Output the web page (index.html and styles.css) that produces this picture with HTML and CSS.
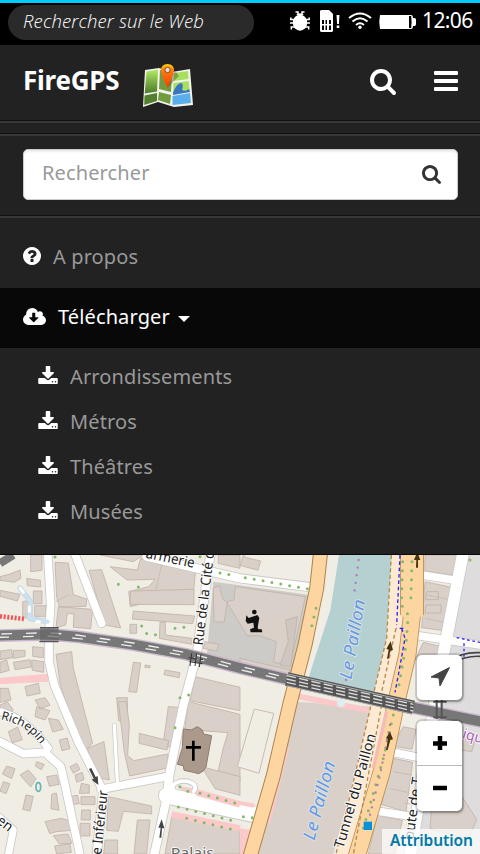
FILE: index.html
```html
<!DOCTYPE html>
<html lang="fr">
<head>
<meta charset="utf-8">
<title>FireGPS</title>
<link rel="stylesheet" href="styles.css">
</head>
<body>
<svg class="defs" aria-hidden="true">
  <symbol id="search" viewBox="64 128 1664 1664"><path d="M1216 832q0-185-131.500-316.500t-316.500-131.500-316.500 131.500-131.500 316.500 131.500 316.500 316.500 131.500 316.500-131.500 131.500-316.500zm512 832q0 52-38 90t-90 38q-54 0-90-38l-343-342q-179 124-399 124-143 0-273.500-55.500t-225-150-150-225-55.500-273.500 55.500-273.500 150-225 225-150 273.500-55.500 273.500 55.500 225 150 150 225 55.500 273.500q0 220-124 399l343 343q37 37 37 90z"/></symbol>
  <symbol id="download" viewBox="64 0 1664 1536"><path d="M1344 1344q0-26-19-45t-45-19-45 19-19 45 19 45 45 19 45-19 19-45zm256 0q0-26-19-45t-45-19-45 19-19 45 19 45 45 19 45-19 19-45zm128-224v320q0 40-28 68t-68 28h-1472q-40 0-68-28t-28-68v-320q0-40 28-68t68-28h465l135 136q58 56 136 56t136-56l136-136h464q40 0 68 28t28 68zm-325-569q17 41-14 70l-448 448q-18 19-45 19t-45-19l-448-448q-31-29-14-70 17-39 59-39h256v-448q0-26 19-45t45-19h256q26 0 45 19t19 45v448h256q42 0 59 39z"/></symbol>
  <symbol id="cloud" viewBox="-64 128 1920 1408"><path d="M1216 928q0-14-9-23t-23-9h-224v-352q0-13-9.500-22.500t-22.500-9.500h-192q-13 0-22.500 9.500t-9.500 22.500v352h-224q-13 0-22.500 9.500t-9.500 22.500q0 14 9 23l352 352q9 9 23 9t23-9l351-351q10-12 10-24zm640 224q0 159-112.500 271.500t-271.500 112.500h-1088q-185 0-316.500-131.500t-131.500-316.500q0-130 70-240t188-165q-2-30-2-43 0-212 150-362t362-150q156 0 285.500 87t188.500 231q71-62 166-62 106 0 181 75t75 181q0 76-41 138 130 31 213.500 135.500t83.500 238.500z"/></symbol>
  <symbol id="question" viewBox="128 128 1536 1536"><path d="M1024 1376v-192q0-14-9-23t-23-9h-192q-14 0-23 9t-9 23v192q0 14 9 23t23 9h192q14 0 23-9t9-23zm256-672q0-88-55.500-163t-138.500-116-170-41q-243 0-371 213-15 24 8 42l132 100q7 6 19 6 16 0 25-12 53-68 86-92 34-24 86-24 48 0 85.500 26t37.500 59q0 38-20 61t-68 45q-63 28-115.500 86.500t-52.500 125.500v36q0 14 9 23t23 9h192q14 0 23-9t9-23q0-19 21.500-49.500t54.500-49.500q32-18 49-28.500t46-35 44.500-48 28-60.500 12.500-81zm384 192q0 209-103 385.500t-279.500 279.500-385.500 103-385.500-103-279.500-279.500-103-385.500 103-385.500 279.500-279.500 385.500-103 385.500 103 279.500 279.500 103 385.500z"/></symbol>
</svg>

<header class="status">
  <div class="websearch"><span>Rechercher sur le Web</span></div>
  <svg class="status-icons" viewBox="288 8 130 26" width="130" height="26">
    <g fill="none" stroke="#fff" stroke-width="1.500">
      <path d="M295.500 12h2.500v3M304.500 12h-2.500v3M290.800 17.500v2h18.400v-2M290 23h20M291.300 29.500V27h17.400v2.500"/>
    </g>
    <ellipse cx="300" cy="22.700" rx="7.200" ry="8" fill="#fff"/><path d="M296 15q4-3.500 8 0z" fill="#fff"/>
    <path d="M320 11l1-1h8l4 4v17l-1 1h-11l-1-1z" fill="#fff"/>
    <path d="M322 20h2v4h-2zM325.500 20h1.500v4h-1.500zM329 20h2v4h-2zM322 25.500h2V30h-2zM325.500 25.500h1.500V30h-1.500zM329 25.500h2V30h-2z" fill="#000"/>
    <path d="M336.500 15h3l-.6 9h-1.800zM336.700 25.500h2.600v2.500h-2.600z" fill="#fff"/>
    <g fill="none" stroke="#fff" stroke-width="2"><path d="M349 18q11-9 22 0M352.500 21.500q7.500-6.500 15 0M356 25q4-3.500 8 0"/></g>
    <circle cx="360" cy="27.200" r="1.700" fill="#fff"/>
    <path d="M380 15h31q2 0 2 3h1.500q1.500 0 1.500 2v4q0 2-1.500 2H413q0 3-2 3h-31q-1.500-7 0-14z" fill="#fff"/>
    <path d="M409 16h2.200q.8 6 0 12H409z" fill="#000"/>
  </svg>
  <span class="clock">12:06</span>
</header>

<nav class="navbar">
  <div class="navbar-head">
    <span class="brand">FireGPS</span>
    <svg class="logo" viewBox="0 0 50 46" width="50" height="46">
      <defs><linearGradient id="green" x2="0" y2="1"><stop stop-color="#b5ed63"/><stop offset=".55" stop-color="#78aa43"/><stop offset="1" stop-color="#4f7a28"/></linearGradient>
      <linearGradient id="pin" x2="0" y2="1"><stop stop-color="#ffd500"/><stop offset=".25" stop-color="#ff7b10"/><stop offset="1" stop-color="#f04000"/></linearGradient></defs>
      <path d="M2 7l14-2 13 4 18-3 3 36-19 2-16-5-15 5z" fill="#f3f3ee"/>
      <path d="M3.500 8.500L15 6.500l-1 22-12.300 2z" fill="url(#green)"/><path d="M1.500 32.500L14 30v8L1.200 42z" fill="#547f2e"/>
      <path d="M17 7l12 4-1 18-12-3zM16 29l12 3-1 9-12-4z" fill="#719c3d"/>
      <path d="M31 10l14-2 .6 8-15 2zM30.500 20l15.300-2 .7 9-16.500 3z" fill="#a9df5e"/>
      <path d="M30 30q3-9 8-10 3 1 1 7 3 2 7-1l1 3-17 3z" fill="#3875c0"/><path d="M29.500 33l17.500-3 1 10-18.500 2z" fill="#5aaeec"/>
      <path d="M24 25L36 13l-3-4-6 2z" fill="#263516" opacity=".35"/>
      <path d="M24.500 25Q18 12 18 7.500 18 1 24.500 1T31 7.500Q31 12 24.500 25z" fill="url(#pin)"/><circle cx="24.500" cy="7" r="2.700" fill="#ddd" stroke="#95450b"/>
    </svg>
    <svg class="icon head-search"><use href="#search"/></svg>
    <div class="bars"><i></i><i></i><i></i></div>
  </div>
  <div class="gap-row"></div>
  <div class="search-row">
    <div class="field"><span>Rechercher</span><svg class="icon field-search"><use href="#search"/></svg></div>
  </div>
  <div class="menu">
    <a class="item"><svg class="icon q"><use href="#question"/></svg><span>A propos</span></a>
    <a class="item active"><svg class="icon c"><use href="#cloud"/></svg><span>Télécharger</span><i class="caret"></i></a>
    <div class="sub">
      <a><svg class="icon d"><use href="#download"/></svg><span>Arrondissements</span></a>
      <a><svg class="icon d"><use href="#download"/></svg><span>Métros</span></a>
      <a><svg class="icon d"><use href="#download"/></svg><span>Théâtres</span></a>
      <a><svg class="icon d"><use href="#download"/></svg><span>Musées</span></a>
    </div>
  </div>
</nav>

<main class="map">
  <svg class="tiles" viewBox="0 30 1440 897" width="480" height="299">
    <defs><path id="richepin-path" d="M2 523Q40 532 68 546 108 574 128 608"/></defs>
    <rect y="30" width="1440" height="897" fill="#f0ede5"/>
    <!-- land areas -->
    <path d="M640 110L930 150 870 400 620 335z" fill="#cccbc7"/>
    <path d="M1400 30h40v897h-190l80-590z" fill="#dfdcde"/>
    <path d="M1017 30h160l-15 250-40 170-197-50 66-205z" fill="#b5d0d0"/>
    <path d="M885 470L1120 485 1000 927H750z" fill="#d9d0c9"/>
    <path d="M893 445L1110 488 1105 505 890 462zM863 605h6l-58 228h-10z" fill="#fbc9c9"/>
    <path d="M0 398l145-12v24L0 418z" fill="#fbc9c9"/>
    <!-- buildings -->
    <g fill="#d9d0c9" stroke="#c2b2a8" stroke-width="2.500">
      <path d="M92 30h34v46l-34 4zM0 95l30-8 30-12 3 25-20 12-43-6zM80 100l42 6v20l-40-4zM0 136l60 12-8 20-52-14zM68 170l28-5v50l-28 5zM100 138h26v38h-26zM104 182h34v32h-34z"/>
      <path d="M165 52l40 2 15 95 40 13-2 22-80 2-8-30zM175 185l103 8-6 58-52-4 2-40-20-2-5 35-29 8z"/>
      <path d="M267 76l38-2 57 175-48-9z"/><path d="M330 65l82 10 10-35 60 20 105 12-6 65-190 48-5-45 60-15 20-22-85 2z"/>
      <path d="M392 138l190-5v46l-192-1zM400 198l184 15-6 23-181-14zM390 238h20v27h-20zM480 232h16v38l80 10v18l-98-18zM300 30h130l-30 20zM655 30h65v40l-65-15z"/>
      <path d="M640 130l18-8 10 40 14 10-10 60-30-2zM680 170l22-5 4-40 210 30-45 205-50-8 8-62-50-18-38 0zM615 290l42 8-8 20-40-8z"/>
      <path d="M0 318l35-4 3 24-38 6zM40 316h35v18l-35 6zM98 305l32 3v30l-32-4zM0 352l20-8 8 32-28 8zM40 352l50-8 5 22-50 8zM95 345l36 5v32l-34-6z"/>
      <path d="M168 328l47-8 5 50 58 225-20 18-45-82-12-50-20-60zM400 352l22 2-12 88-24-2zM435 360l15 2v6h-15zM495 375l45 8-3 15-45-9zM350 458h32v70h-26z"/>
      <path d="M586 395l134 32v70l-150-30zM565 470l155 38v200l-70-10 20-90 14-45-130-10zM505 485l50 3-30 125-36-14zM355 470h24l9 70-5 92 18 15 102-20v42l-114 24-16-70z"/>
      <path d="M418 565l88 22-5 28-84-20zM262 610l50-20 16 115-38-8zM325 755l130 28v24l-85-8-15 60-35-3zM412 825h38l-10 102h-38zM315 885h38v42h-42z"/>
      <path d="M75 425l40-10 6 30-40 8zM105 465l30-7 15 22-30 12zM0 430h25l8 35-33 7zM0 480l22-10 18 25-15 20-25-10zM110 485l40 12-15 28-30-10zM145 520l30 5 15 28-32 8zM178 585l24-6 8 32-24 6zM25 560l28-14 14 38-30 10z"/>
      <path d="M20 663l25 8-10 30-28-14zM60 690l25-15 23 26-16 25zM10 710l20 6-12 30-18-8zM78 750l22 4-10 44-22-5zM110 650l23 8-9 16-18-11zM140 695l30-5 8 28-30 6zM155 748l14-4 8 52-24-5zM210 665l20-10 10 18-20 12zM225 690l22-8 5 22-22 8zM244 715l24 5v25h-30zM205 755l28-4 5 25-24 3zM243 755h42v24h-42zM135 830l48-10 28 8 4 28-46 4-20 6zM160 872l44-5 12 28-38 2zM164 903l46-7 4 26-44 5zM245 795h26v30h-28zM240 835h30v38h-30z"/>
      <path d="M515 815L720 855v72H495zM605 665l115 30v56l-75-20zM730 30l10 8 42 10-8 28-54-15zM720 340l150 35v25l-150-30zM1275 30h110l-16 62-95-14zM1275 110l85 18-20 130-75-10zM1280 140h35v24h-38zM1278 180h45v24h-48zM1270 292l58 14-10 50-72-14zM1210 545l38 8-12 60-60-10zM1180 640l58 12-20 148-75-22zM1132 810l75 16-22 101h-80zM1298 740l90 18 42 65-25 60-115-32zM1375 575l50 10-10 35-50-8z"/>
      <path d="M840 360l25-70-8-65 35-10-20 150z" fill="#cfc7bf"/>
    </g>
    <path d="M763 492l58 13-44 180-65-20z" fill="#f0ede5" stroke="#cabcb1" stroke-width="3"/>
    <g fill="none" stroke="#c2b2a8" stroke-width="2"><path d="M485 62l-17 70M1280 150l70 14M1275 220l60 12M1180 680l55 10M1168 730l55 12M1275 780l-60-5M205 150l-38 20"/></g>
    <!-- road casings -->
    <g fill="none" stroke="#c9c8c7" stroke-linecap="round" stroke-linejoin="round">
      <path stroke-width="28" d="M143 20L152 180 147 260V350L163 420 235 592 303 725M222 20L305 235M303 733L500 695M0 590L70 626 135 622 182 665 195 720 240 930"/>
      <path d="M0 500Q80 520 145 610M-10 810L40 855 25 930" stroke-width="26"/>
      <path d="M632 20L590 330 550 480 508 690 498 770 460 940M310 735L290 930M440 35L720 100 935 127" stroke-width="30"/>
      <path d="M343 540L352 710" stroke-width="14"/><path d="M500 752L780 812" stroke-width="52"/>
      <path d="M1390 20L1322 370 1230 930" stroke-width="40"/><path d="M1265 90L1375 107M1260 273L1440 300M1170 620L1280 642M1130 798L1240 815" stroke-width="28"/>
      <path d="M60 130l32 40-4 50 55 10" stroke-width="16" stroke="#c5d6df"/>
      <ellipse cx="552" cy="728" rx="34" ry="20" stroke-width="16"/>
    </g>
    <g fill="none" stroke="#fff" stroke-linecap="round" stroke-linejoin="round">
      <path d="M143 20L152 180 147 260V350L163 420 235 592 303 725M222 20L305 235M303 733L500 695M0 590L70 626 135 622 182 665 195 720 240 930" stroke-width="23"/>
      <path d="M0 500Q80 520 145 610M-10 810L40 855 25 930" stroke-width="21"/>
      <path d="M632 20L590 330 550 480 508 690 498 770 460 940M310 735L290 930M440 35L720 100 935 127" stroke-width="25"/>
      <path d="M343 540L352 710" stroke-width="10"/><path d="M500 752L780 812" stroke-width="47"/>
      <path d="M1390 20L1322 370 1230 930" stroke-width="35"/><path d="M1265 90L1375 107M1260 273L1440 300M1170 620L1280 642M1130 798L1240 815" stroke-width="23"/>
      <path d="M60 130l32 40-4 50 55 10" stroke-width="12" stroke="#cbe0f0"/>
      <path d="M60 130l10 12M88 185v14M110 230h8" stroke-width="9"/>
      <ellipse cx="552" cy="728" rx="34" ry="20" stroke-width="11"/>
    </g>
    <path d="M550 552l24 3 18-10 15 10 4 12 24 5-17 94-8 12-14 8-20-5-24-5-2-14-18-4 15-50z" fill="#ab9a8c" stroke="#8d7c6e" stroke-width="3"/>
    <path d="M558 607h45M580 587v60" stroke="#000" stroke-width="8"/>
    <path d="M590 742L720 778M515 808L720 850" stroke="#fbc9c9" stroke-width="19"/>
    <path d="M530 722l45 8 3 16-30-8z" fill="#f0cccb"/>
    <path d="M720 768l45 8-5 12-40-8zM720 850l30 4-14 73h-16z" fill="#fbc9c9"/>
    <path d="M0 214L74 222" stroke="#f65050" stroke-width="14" stroke-dasharray="6 5"/>
    <!-- boulevards -->
    <path d="M1175 25L1160 280 1122 440 1010 927H1090L1195 470 1240 250V25z" fill="#feead2"/>
    <g fill="none" stroke-linejoin="round">
      <path d="M962 20L950 130 915 300 870 475 820 692 750 935" stroke="#ad8449" stroke-width="45"/>
      <path d="M962 20L950 130 915 300 870 475 820 692 750 935" stroke="#fdd5a0" stroke-width="39"/>
      <path d="M1237 20L1236 210 1222 330 1187 480 1145 680 1070 935" stroke="#b78d50" stroke-width="54"/>
      <path d="M1237 20L1236 210 1222 330 1187 480 1145 680 1070 935" stroke="#fdd5a0" stroke-width="49"/>
      <path d="M1236 20V210" stroke="#b78d50" stroke-width="72"/><path d="M1236 20V215" stroke="#fdd5a0" stroke-width="67"/>
      <path d="M1174 30L1160 280 1122 440 1065 690 1008 927M1188 250L1145 440M1145 480L1060 927" stroke="#b58a4d" stroke-width="4" stroke-dasharray="12 8"/>
      <path d="M1200 30L1190 240M1205 250L1215 280 1195 390 1185 442M1210 250h-20" stroke="#2b22ff" stroke-width="4" stroke-dasharray="11 8"/>
      <path d="M1370 278L1440 292M1392 295v40" stroke="#2b22ff" stroke-width="4" stroke-dasharray="8 8"/>
      <path d="M1160 500l-40 170" stroke="#f5bcb7" stroke-width="10"/>
    </g>
    <g fill="none" stroke="#82ba69" stroke-width="9" stroke-linecap="round" stroke-dasharray="0 27">
      <path d="M1208 50L1204 180 1225 210 1218 300 1195 430M1236 50L1232 180M948 190L935 245M736 98L925 132M1180 510L1150 640 1090 850M355 118l22 8M415 126h1M425 243l14 22 30 5M525 250l42-5M660 84l45 8M540 458l32-10M525 548l22 6M535 786L710 830M560 820L710 857M600 745L720 778M540 725l35 20M730 815l45 6M165 36h2M600 35h2M450 40h2M1410 45h1"/>
    </g>
    <g fill="none" stroke="#b178bc" stroke-width="7" stroke-linecap="round" stroke-dasharray="0 23"><path d="M1076 45L1062 150M1038 405l-8 30M1170 540L1140 690 1105 830"/></g>
    <!-- railway -->
    <g fill="none">
      <path d="M-5 272L145 268 230 275 400 299 560 328 720 369 860 402 1100 456 1250 490 1445 530" stroke="#c9b8cc" stroke-width="38"/>
      <path d="M-5 272L145 268 230 275 400 299 560 328 720 369 860 402 1100 456 1250 490 1445 530" stroke="#777" stroke-width="30"/>
      <path d="M-5 277L145 273 230 280 400 304 560 333 720 374 860 407" stroke="#eee" stroke-width="4" stroke-dasharray="32 42"/>
      <path d="M4 267L145 263 230 270 400 294 560 323 720 364 860 397" stroke="#eee" stroke-width="4" stroke-dasharray="32 42"/>
      <path d="M860 402L1100 456 1240 488" stroke="#555" stroke-width="42"/>
      <path d="M860 392L1100 446 1240 478M860 412L1100 466 1240 498M860 402L1100 456 1240 488" stroke="#ddd" stroke-width="4" stroke-dasharray="28 10"/>
      <path d="M860 386L1240 472M860 422L1240 508" stroke="#ddd" stroke-width="2"/>
      <path d="M120 248h56M118 290h58" stroke="#555" stroke-width="4"/><path d="M120 268h56" stroke="#666" stroke-width="38" opacity=".7"/>
      <path d="M566 338l44 6M568 350l40 6M575 325l-5 38M590 325l-5 38M603 328l-5 38" stroke="#333" stroke-width="3"/>
      <path d="M1350 348q35-28 90-25M1360 354q35-22 80-20" stroke="#444" stroke-width="5"/>
      <path d="M1310 462v60M1325 462v60M1300 470h40M1300 517h40" stroke="#555" stroke-width="6"/>
      <path d="M0 55L40 30" stroke="#777" stroke-width="24"/>
    </g>
    <!-- map symbols -->
    <g fill="#111"><circle cx="763" cy="201" r="7"/><path d="M739 211l7 8 26-9 6 8-5 29 2 6h10l2 9h-35l-2-9 12-5-2-15-17 3-6-8z"/></g>
    <g fill="#48340c"><path d="M1248 68h6V45h7l-9-24-10 24h7zM1161 341h5l5-24 8-2-7-26-13 22 7 3zM1158 615h5l8-30 8-2-9-23-12 19 6 4z"/></g>
    <g fill="#444"><path d="M478 878h6l2-28h7l-8-27-10 25h7zM267 672l14 29-6 3 20 16-2-27-6 3-13-27z"/></g>
    <path d="M1091 830h25v25h-25z" fill="#0492dc"/>
    <g fill="none" stroke="#67b4b4" stroke-width="5"><ellipse cx="115" cy="726" rx="7" ry="13"/></g>
    <circle cx="1023" cy="474" r="12" fill="#dceef0"/>
    <!-- labels -->
    <g class="labels">
      <text transform="translate(608 302) rotate(-83)" textLength="285" lengthAdjust="spacingAndGlyphs">Rue de la Cité d</text>
      <text transform="translate(436 38) rotate(12)" textLength="148" lengthAdjust="spacingAndGlyphs">armerie</text>
      <text class="curved"><textPath href="#richepin-path">Richepin</textPath></text>
      <text transform="translate(302 945) rotate(-84)" textLength="208" lengthAdjust="spacingAndGlyphs">re Inférieur</text>
      <text transform="translate(-12 832) rotate(38)" textLength="48" lengthAdjust="spacingAndGlyphs">en</text>
      <text transform="translate(1030 912) rotate(-74)" textLength="356" lengthAdjust="spacingAndGlyphs">Tunnel du Paillon</text>
      <text transform="translate(1240 885) rotate(-82)" textLength="188" lengthAdjust="spacingAndGlyphs">oute de T</text>
      <text class="place" x="512" y="938" textLength="130" lengthAdjust="spacingAndGlyphs">Palais</text>
      <text class="water" transform="translate(1054 405) rotate(-80)" textLength="242" lengthAdjust="spacingAndGlyphs">Le Paillon</text>
      <text class="water" transform="translate(943 888) rotate(-75)" textLength="242" lengthAdjust="spacingAndGlyphs">Le Paillon</text>
      <text class="metro" transform="translate(1385 578) rotate(16)">ique</text>
    </g>
  </svg>
  <div class="controls">
    <div class="control"><svg width="45" height="45"><path d="M32.500 12.500L23 31 22 23 14 22z" fill="#444" stroke="#444" stroke-linejoin="round"/></svg></div>
    <div class="control zoom"><svg width="45" height="44"><path d="M16 22.500h14M23 15v14" stroke="#000" stroke-width="4.500"/></svg><svg width="45" height="45"><path d="M16 22h14" stroke="#000" stroke-width="4.500"/></svg></div>
  </div>
  <div class="attribution"><span>Attribution</span></div>
</main>
</body>
</html>
```
FILE: styles.css
```css
* { box-sizing: border-box; }
body {
  margin: 0;
  width: 480px;
  height: 854px;
  overflow: hidden;
  background: #222;
  color: #999;
  font-family: "Noto Sans", "Open Sans", sans-serif;
  font-size: 20px;
  line-height: 30px;
  letter-spacing: 0.12px;
}
.defs { display: none; }
svg { display: block; }
span { white-space: nowrap; }

.status {
  display: flex;
  height: 45px;
  padding-left: 8px;
  background: #000;
  border-top: 3px solid #00caff;
}
.websearch {
  width: 246px;
  height: 35px;
  margin-top: 2px;
  padding-left: 15px;
  border-radius: 18px;
  background: #2a2a2a;
  color: #fff;
  font-family: "Open Sans", "Noto Sans", sans-serif;
  font-size: 18.500px;
  font-style: italic;
  font-weight: 300;
  line-height: 32px;
  letter-spacing: 0.15px;
}
.status-icons { margin: 5px 0 0 34px; }
.clock {
  margin-left: 4px;
  color: #fff;
  font-size: 21px;
  line-height: 35px;
  letter-spacing: -0.6px;
}

.navbar { height: 510px; border-bottom: 1px solid #080808; }
.navbar-head {
  display: flex;
  align-items: flex-start;
  height: 75px;
  padding: 0 22px 0 23px;
}
.brand {
  width: 120px;
  margin-top: 20px;
  color: #fff;
  font-size: 26px;
  font-weight: 700;
  letter-spacing: -0.25px;
}
.logo { margin-top: 18px; }
.icon { flex: none; fill: #fff; }
.head-search { width: 26px; height: 26px; margin: 24px 0 0 177px; }
.bars { display: grid; gap: 4px; width: 24px; margin: 26px 0 0 38px; }
.bars i { height: 4px; border-radius: 1px; background: #fff; }

.gap-row, .search-row, .menu { border-top: 1px solid #101010; box-shadow: inset 0 2px #383838; }
.gap-row { height: 13px; }
.search-row { height: 82px; padding: 15px 22px 0 23px; }
.field {
  display: flex;
  justify-content: space-between;
  height: 51px;
  padding: 0 16px 0 18px;
  border: 1px solid #ccc;
  border-radius: 5px;
  background: #fff;
  box-shadow: inset 0 2px 2px rgba(0,0,0,.08);
  line-height: 46px;
}
.field-search { width: 19px; height: 19px; margin-top: 15px; fill: #333; }

.menu { padding-top: 12px; }
.item { display: flex; align-items: center; height: 60px; padding: 0 0 2px 23px; }
.item.active { background: #080808; color: #fff; }
.q { width: 18px; height: 18px; margin: 0 12px 2px 0; }
.c { width: 23px; height: 17px; margin: 0 12px 2px 0; }
.caret {
  margin: 4px 0 0 8px;
  border: 6px solid transparent;
  border-top-color: #fff;
  border-bottom: 0;
}
.sub { padding: 7px 0 0 38px; }
.sub a { display: flex; align-items: center; height: 45px; padding-bottom: 2px; }
.d { width: 20px; height: 18px; margin: 0 12px 3px 0; }

.map { position: relative; height: 299px; overflow: hidden; }
.labels {
  font-size: 42px;
  fill: #222;
  stroke: #fff;
  stroke-width: 5px;
  paint-order: stroke;
  stroke-linejoin: round;
  letter-spacing: 0;
}
.curved { font-size: 36px; }
.place { font-size: 45px; fill: #666; }
.water { font-style: italic; font-size: 52px; fill: #6699dc; stroke: #dde5ec; }
.metro { fill: #a65bb5; }
.controls { position: absolute; top: 100px; right: 18px; display: grid; gap: 21px; }
.control { width: 45px; border-radius: 5px; background: #fff; box-shadow: 0 0 0 2px rgba(0,0,0,.14), 1px 2px 3px rgba(0,0,0,.3); }
.zoom svg + svg { border-top: 1px solid #bbb; height: 46px; }
.attribution {
  position: absolute;
  right: 0;
  bottom: 0;
  width: 98px;
  height: 25px;
  padding-left: 8px;
  background: rgba(255,255,255,.72);
  color: #0078a8;
  font-size: 15.500px;
  font-weight: 600;
  line-height: 23px;
  letter-spacing: -0.1px;
}
```
